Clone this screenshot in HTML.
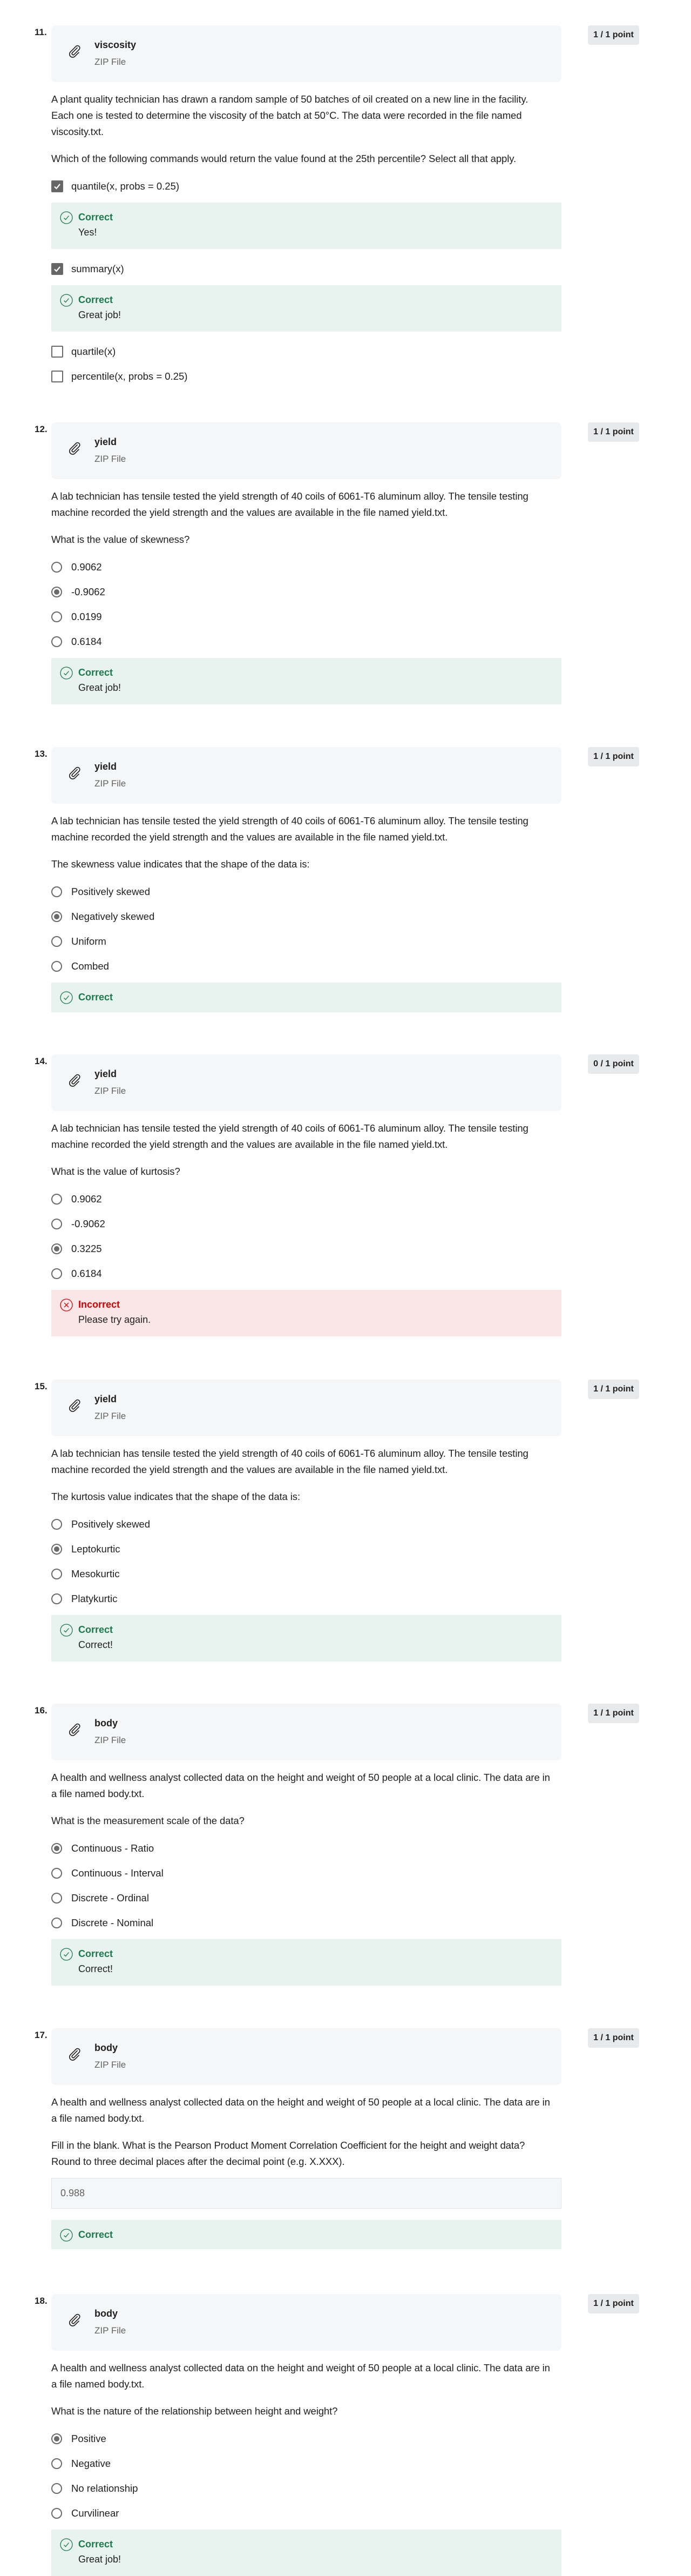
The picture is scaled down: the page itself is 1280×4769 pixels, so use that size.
<!DOCTYPE html>
<html><head><meta charset="utf-8">
<style>
*{box-sizing:border-box;margin:0;padding:0}
body{width:1280px;height:4740px;position:relative;background:#fff;font-family:"Liberation Sans",sans-serif;color:#1f1f1f;font-size:18px;overflow:hidden}
.q{position:absolute;left:0;width:1280px}
.num{position:absolute;left:64px;top:3px;font-weight:bold;font-size:17px;line-height:20px}
.badge{position:absolute;left:1089px;top:0;width:95px;height:36px;background:#e8e9eb;border-radius:4px;font-weight:bold;font-size:16px;line-height:36px;text-align:center;color:#1f1f1f;white-space:nowrap}
.body{position:absolute;left:95px;top:0;width:945px}
.card{height:105px;background:#f5f6f7;border-radius:8px;position:relative}
.card svg{position:absolute;left:30px;top:34px}
.card .t{position:absolute;left:80px;top:25px;font-weight:bold;font-size:18px;line-height:22px}
.card .s{position:absolute;left:80px;top:57px;font-size:17px;color:#636363;line-height:22px}
.p{margin-top:17px;line-height:30px;white-space:nowrap;font-size:18.5px;letter-spacing:-0.1px}
.qq{margin-top:20px;line-height:30px;white-space:nowrap;font-size:18.5px;letter-spacing:-0.1px}
.opts{margin-top:13px}
.o{height:46px;position:relative;line-height:46px;padding-left:37px;font-size:18.5px}
.r{position:absolute;left:0;top:13px;width:20px;height:20px;border:2px solid #6a6a6a;border-radius:50%}
.r.on::after{content:"";position:absolute;left:3px;top:3px;width:10px;height:10px;border-radius:50%;background:#6a6a6a}
.c{position:absolute;left:0;top:12px;width:22px;height:22px;border:2px solid #6a6a6a;border-radius:2px}
.c.on{background:#666}
.c.on svg{position:absolute;left:1px;top:1px}
.fb{margin-top:7px;background:#e8f2ee;position:relative;padding:14px 0 0 50px;font-size:18px}
.fb.two{height:86px}
.fb.one{height:55px}
.fb .ic{position:absolute;left:16px;top:16px}
.fb .h{font-weight:bold;color:#1b7a4d;line-height:26px}
.fb .m{line-height:30px}
.fb.bad{background:#fae6e6}
.fb.bad .h{color:#d30001}
.inp{margin-top:15px;height:57px;background:#f5f6f7;border:1px solid #e2e3e5;padding-left:16px;line-height:55px;color:#636363;font-size:18px}
.gap{height:14px}
</style></head><body>

<!-- Q11 -->
<div class="q" style="top:47px">
<div class="num">11.</div><div class="badge">1 / 1 point</div>
<div class="body">
<div class="card"><svg width="28" height="28" viewBox="0 0 24 24" fill="none" stroke="#1f1f1f" stroke-width="1.4" stroke-linecap="round"><path d="M15.5 6.5 L7.5 14.5 a2 2 0 0 0 2.8 2.8 L18.5 9.1 a3.5 3.5 0 0 0 -5 -5 L4.7 12.9 a5 5 0 0 0 7.1 7.1 L18 13.8"/></svg><div class="t">viscosity</div><div class="s">ZIP File</div></div>
<div class="p">A plant quality technician has drawn a random sample of 50 batches of oil created on a new line in the facility.<br>Each one is tested to determine the viscosity of the batch at 50°C. The data were recorded in the file named<br>viscosity.txt.</div>
<div class="qq">Which of the following commands would return the value found at the 25th percentile? Select all that apply.</div>
<div class="opts">
<div class="o"><span class="c on"><svg width="16" height="16" viewBox="0 0 16 16"><path d="M3 8.5 L6.5 12 L13 4" stroke="#fff" stroke-width="2.2" fill="none"/></svg></span>quantile(x, probs = 0.25)</div>
<div class="fb two"><svg class="ic" width="24" height="24" viewBox="0 0 24 24" fill="none" stroke="#1b7a4d" stroke-width="1.3"><circle cx="12" cy="12" r="11"/><path d="M7.5 12.5 L10.5 15.5 L16.5 8.5"/></svg><div class="h">Correct</div><div class="m">Yes!</div></div>
<div class="gap"></div>
<div class="o"><span class="c on"><svg width="16" height="16" viewBox="0 0 16 16"><path d="M3 8.5 L6.5 12 L13 4" stroke="#fff" stroke-width="2.2" fill="none"/></svg></span>summary(x)</div>
<div class="fb two"><svg class="ic" width="24" height="24" viewBox="0 0 24 24" fill="none" stroke="#1b7a4d" stroke-width="1.3"><circle cx="12" cy="12" r="11"/><path d="M7.5 12.5 L10.5 15.5 L16.5 8.5"/></svg><div class="h">Correct</div><div class="m">Great job!</div></div>
<div class="gap"></div>
<div class="o"><span class="c"></span>quartile(x)</div>
<div class="o"><span class="c"></span>percentile(x, probs = 0.25)</div>
</div></div></div>

<!-- Q12 -->
<div class="q" style="top:782px">
<div class="num">12.</div><div class="badge">1 / 1 point</div>
<div class="body">
<div class="card"><svg width="28" height="28" viewBox="0 0 24 24" fill="none" stroke="#1f1f1f" stroke-width="1.4" stroke-linecap="round"><path d="M15.5 6.5 L7.5 14.5 a2 2 0 0 0 2.8 2.8 L18.5 9.1 a3.5 3.5 0 0 0 -5 -5 L4.7 12.9 a5 5 0 0 0 7.1 7.1 L18 13.8"/></svg><div class="t">yield</div><div class="s">ZIP File</div></div>
<div class="p">A lab technician has tensile tested the yield strength of 40 coils of 6061-T6 aluminum alloy. The tensile testing<br>machine recorded the yield strength and the values are available in the file named yield.txt.</div>
<div class="qq">What is the value of skewness?</div>
<div class="opts">
<div class="o"><span class="r"></span>0.9062</div>
<div class="o"><span class="r on"></span>-0.9062</div>
<div class="o"><span class="r"></span>0.0199</div>
<div class="o"><span class="r"></span>0.6184</div>
<div class="fb two"><svg class="ic" width="24" height="24" viewBox="0 0 24 24" fill="none" stroke="#1b7a4d" stroke-width="1.3"><circle cx="12" cy="12" r="11"/><path d="M7.5 12.5 L10.5 15.5 L16.5 8.5"/></svg><div class="h">Correct</div><div class="m">Great job!</div></div>
</div></div></div>

<!-- Q13 -->
<div class="q" style="top:1383px">
<div class="num">13.</div><div class="badge">1 / 1 point</div>
<div class="body">
<div class="card"><svg width="28" height="28" viewBox="0 0 24 24" fill="none" stroke="#1f1f1f" stroke-width="1.4" stroke-linecap="round"><path d="M15.5 6.5 L7.5 14.5 a2 2 0 0 0 2.8 2.8 L18.5 9.1 a3.5 3.5 0 0 0 -5 -5 L4.7 12.9 a5 5 0 0 0 7.1 7.1 L18 13.8"/></svg><div class="t">yield</div><div class="s">ZIP File</div></div>
<div class="p">A lab technician has tensile tested the yield strength of 40 coils of 6061-T6 aluminum alloy. The tensile testing<br>machine recorded the yield strength and the values are available in the file named yield.txt.</div>
<div class="qq">The skewness value indicates that the shape of the data is:</div>
<div class="opts">
<div class="o"><span class="r"></span>Positively skewed</div>
<div class="o"><span class="r on"></span>Negatively skewed</div>
<div class="o"><span class="r"></span>Uniform</div>
<div class="o"><span class="r"></span>Combed</div>
<div class="fb one"><svg class="ic" width="24" height="24" viewBox="0 0 24 24" fill="none" stroke="#1b7a4d" stroke-width="1.3"><circle cx="12" cy="12" r="11"/><path d="M7.5 12.5 L10.5 15.5 L16.5 8.5"/></svg><div class="h">Correct</div></div>
</div></div></div>

<!-- Q14 -->
<div class="q" style="top:1952px">
<div class="num">14.</div><div class="badge">0 / 1 point</div>
<div class="body">
<div class="card"><svg width="28" height="28" viewBox="0 0 24 24" fill="none" stroke="#1f1f1f" stroke-width="1.4" stroke-linecap="round"><path d="M15.5 6.5 L7.5 14.5 a2 2 0 0 0 2.8 2.8 L18.5 9.1 a3.5 3.5 0 0 0 -5 -5 L4.7 12.9 a5 5 0 0 0 7.1 7.1 L18 13.8"/></svg><div class="t">yield</div><div class="s">ZIP File</div></div>
<div class="p">A lab technician has tensile tested the yield strength of 40 coils of 6061-T6 aluminum alloy. The tensile testing<br>machine recorded the yield strength and the values are available in the file named yield.txt.</div>
<div class="qq">What is the value of kurtosis?</div>
<div class="opts">
<div class="o"><span class="r"></span>0.9062</div>
<div class="o"><span class="r"></span>-0.9062</div>
<div class="o"><span class="r on"></span>0.3225</div>
<div class="o"><span class="r"></span>0.6184</div>
<div class="fb two bad"><svg class="ic" width="24" height="24" viewBox="0 0 24 24" fill="none" stroke="#d30001" stroke-width="1.3"><circle cx="12" cy="12" r="11"/><path d="M8 8 L16 16 M16 8 L8 16"/></svg><div class="h">Incorrect</div><div class="m">Please try again.</div></div>
</div></div></div>

<!-- Q15 -->
<div class="q" style="top:2554px">
<div class="num">15.</div><div class="badge">1 / 1 point</div>
<div class="body">
<div class="card"><svg width="28" height="28" viewBox="0 0 24 24" fill="none" stroke="#1f1f1f" stroke-width="1.4" stroke-linecap="round"><path d="M15.5 6.5 L7.5 14.5 a2 2 0 0 0 2.8 2.8 L18.5 9.1 a3.5 3.5 0 0 0 -5 -5 L4.7 12.9 a5 5 0 0 0 7.1 7.1 L18 13.8"/></svg><div class="t">yield</div><div class="s">ZIP File</div></div>
<div class="p">A lab technician has tensile tested the yield strength of 40 coils of 6061-T6 aluminum alloy. The tensile testing<br>machine recorded the yield strength and the values are available in the file named yield.txt.</div>
<div class="qq">The kurtosis value indicates that the shape of the data is:</div>
<div class="opts">
<div class="o"><span class="r"></span>Positively skewed</div>
<div class="o"><span class="r on"></span>Leptokurtic</div>
<div class="o"><span class="r"></span>Mesokurtic</div>
<div class="o"><span class="r"></span>Platykurtic</div>
<div class="fb two"><svg class="ic" width="24" height="24" viewBox="0 0 24 24" fill="none" stroke="#1b7a4d" stroke-width="1.3"><circle cx="12" cy="12" r="11"/><path d="M7.5 12.5 L10.5 15.5 L16.5 8.5"/></svg><div class="h">Correct</div><div class="m">Correct!</div></div>
</div></div></div>

<!-- Q16 -->
<div class="q" style="top:3154px">
<div class="num">16.</div><div class="badge">1 / 1 point</div>
<div class="body">
<div class="card"><svg width="28" height="28" viewBox="0 0 24 24" fill="none" stroke="#1f1f1f" stroke-width="1.4" stroke-linecap="round"><path d="M15.5 6.5 L7.5 14.5 a2 2 0 0 0 2.8 2.8 L18.5 9.1 a3.5 3.5 0 0 0 -5 -5 L4.7 12.9 a5 5 0 0 0 7.1 7.1 L18 13.8"/></svg><div class="t">body</div><div class="s">ZIP File</div></div>
<div class="p">A health and wellness analyst collected data on the height and weight of 50 people at a local clinic. The data are in<br>a file named body.txt.</div>
<div class="qq">What is the measurement scale of the data?</div>
<div class="opts">
<div class="o"><span class="r on"></span>Continuous - Ratio</div>
<div class="o"><span class="r"></span>Continuous - Interval</div>
<div class="o"><span class="r"></span>Discrete - Ordinal</div>
<div class="o"><span class="r"></span>Discrete - Nominal</div>
<div class="fb two"><svg class="ic" width="24" height="24" viewBox="0 0 24 24" fill="none" stroke="#1b7a4d" stroke-width="1.3"><circle cx="12" cy="12" r="11"/><path d="M7.5 12.5 L10.5 15.5 L16.5 8.5"/></svg><div class="h">Correct</div><div class="m">Correct!</div></div>
</div></div></div>

<!-- Q17 -->
<div class="q" style="top:3755px">
<div class="num">17.</div><div class="badge">1 / 1 point</div>
<div class="body">
<div class="card"><svg width="28" height="28" viewBox="0 0 24 24" fill="none" stroke="#1f1f1f" stroke-width="1.4" stroke-linecap="round"><path d="M15.5 6.5 L7.5 14.5 a2 2 0 0 0 2.8 2.8 L18.5 9.1 a3.5 3.5 0 0 0 -5 -5 L4.7 12.9 a5 5 0 0 0 7.1 7.1 L18 13.8"/></svg><div class="t">body</div><div class="s">ZIP File</div></div>
<div class="p">A health and wellness analyst collected data on the height and weight of 50 people at a local clinic. The data are in<br>a file named body.txt.</div>
<div class="qq">Fill in the blank. What is the Pearson Product Moment Correlation Coefficient for the height and weight data?<br>Round to three decimal places after the decimal point (e.g. X.XXX).</div>
<div class="inp">0.988</div>
<div class="fb one" style="margin-top:21px;height:54px"><svg class="ic" width="24" height="24" viewBox="0 0 24 24" fill="none" stroke="#1b7a4d" stroke-width="1.3"><circle cx="12" cy="12" r="11"/><path d="M7.5 12.5 L10.5 15.5 L16.5 8.5"/></svg><div class="h">Correct</div></div>
</div></div>

<!-- Q18 -->
<div class="q" style="top:4247px">
<div class="num">18.</div><div class="badge">1 / 1 point</div>
<div class="body">
<div class="card"><svg width="28" height="28" viewBox="0 0 24 24" fill="none" stroke="#1f1f1f" stroke-width="1.4" stroke-linecap="round"><path d="M15.5 6.5 L7.5 14.5 a2 2 0 0 0 2.8 2.8 L18.5 9.1 a3.5 3.5 0 0 0 -5 -5 L4.7 12.9 a5 5 0 0 0 7.1 7.1 L18 13.8"/></svg><div class="t">body</div><div class="s">ZIP File</div></div>
<div class="p">A health and wellness analyst collected data on the height and weight of 50 people at a local clinic. The data are in<br>a file named body.txt.</div>
<div class="qq">What is the nature of the relationship between height and weight?</div>
<div class="opts">
<div class="o"><span class="r on"></span>Positive</div>
<div class="o"><span class="r"></span>Negative</div>
<div class="o"><span class="r"></span>No relationship</div>
<div class="o"><span class="r"></span>Curvilinear</div>
<div class="fb two"><svg class="ic" width="24" height="24" viewBox="0 0 24 24" fill="none" stroke="#1b7a4d" stroke-width="1.3"><circle cx="12" cy="12" r="11"/><path d="M7.5 12.5 L10.5 15.5 L16.5 8.5"/></svg><div class="h">Correct</div><div class="m">Great job!</div></div>
</div></div></div>

</body></html>
